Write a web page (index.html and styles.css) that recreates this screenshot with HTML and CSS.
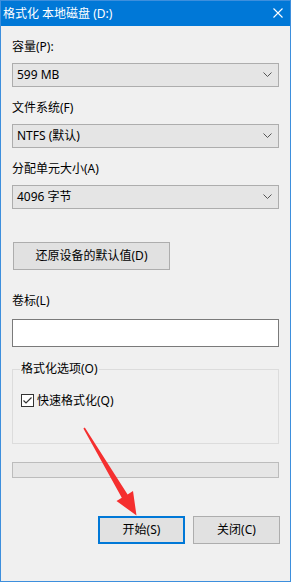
FILE: index.html
```html
<!DOCTYPE html>
<html lang="zh-CN">
<head>
<meta charset="utf-8">
<title>格式化 本地磁盘 (D:)</title>
<link rel="stylesheet" href="styles.css">
</head>
<body>
<div class="window">
  <div class="titlebar">
    <span class="title">格式化 本地磁盘 (D:)</span>
    <svg class="close" width="10" height="10" viewBox="0 0 10 10"><path d="M0.5 0.5L9.5 9.5M9.5 0.5L0.5 9.5" stroke="#fff" stroke-width="1.1" fill="none"/></svg>
  </div>
  <div class="content">
    <div class="label first">容量(P):</div>
    <div class="combo"><span>599 MB</span><svg class="chev" width="9" height="5" viewBox="0 0 9 5"><path d="M0.5 0.5L4.5 4.5L8.5 0.5" stroke="#555" stroke-width="1" fill="none"/></svg></div>
    <div class="label">文件系统(F)</div>
    <div class="combo"><span>NTFS (默认)</span><svg class="chev" width="9" height="5" viewBox="0 0 9 5"><path d="M0.5 0.5L4.5 4.5L8.5 0.5" stroke="#555" stroke-width="1" fill="none"/></svg></div>
    <div class="label">分配单元大小(A)</div>
    <div class="combo"><span>4096 字节</span><svg class="chev" width="9" height="5" viewBox="0 0 9 5"><path d="M0.5 0.5L4.5 4.5L8.5 0.5" stroke="#555" stroke-width="1" fill="none"/></svg></div>
    <div class="btn restore">还原设备的默认值(D)</div>
    <div class="label vol">卷标(L)</div>
    <div class="textbox"></div>
    <fieldset class="group">
      <legend>格式化选项(O)</legend>
      <div class="check-row">
        <svg class="checkbox" width="13" height="13" viewBox="0 0 13 13"><rect x="0.5" y="0.5" width="12" height="12" fill="#fff" stroke="#333"/><path d="M2.5 6.5L5 9L10.5 3.5" stroke="#333" stroke-width="1.2" fill="none"/></svg>
        <span>快速格式化(Q)</span>
      </div>
    </fieldset>
    <div class="progress"></div>
    <div class="actions">
      <div class="btn action default">开始(S)</div>
      <div class="btn action">关闭(C)</div>
    </div>
  </div>
  <svg class="arrow" width="291" height="582" viewBox="0 0 291 582"><polygon points="83.4,428.4 84.8,427.6 127.6,494.4 133,491 136.5,515.5 116.5,501 121.8,497.8" fill="#f52f2f"/></svg>
</div>
</body>
</html>
```

FILE: styles.css
```css
html, body {
  margin: 0;
  padding: 0;
}
body {
  font-family: "Noto Sans", "Noto Sans CJK SC", sans-serif;
  font-size: 12px;
  color: #000;
  background: #f0f0f0;
}
.window {
  position: relative;
  width: 291px;
  height: 582px;
  box-sizing: border-box;
  border: 1px solid #3d8fdd;
  background: #f0f0f0;
  display: flex;
  flex-direction: column;
}
.titlebar {
  height: 25px;
  background: #0078d7;
  display: flex;
  align-items: center;
  justify-content: space-between;
  padding: 0 7px 0 2px;
  color: #fff;
  flex-shrink: 0;
}
.title {
  line-height: 16px;
}
.close {
  display: block;
  margin-top: -1px;
}
.content {
  padding: 0 11px;
  display: flex;
  flex-direction: column;
}
.label {
  line-height: 16px;
  height: 16px;
  margin-top: 13px;
  margin-bottom: 8px;
  padding-left: 0;
}
.label.first {
  margin-top: 13px;
}
.combo {
  height: 24px;
  box-sizing: border-box;
  border: 1px solid #adadad;
  background: #e5e5e5;
  display: flex;
  align-items: center;
  justify-content: space-between;
  padding: 0 4px 0 4px;
  line-height: 16px;
}
.chev {
  display: block;
  margin-right: 2px;
  margin-top: -1px;
}
.btn {
  box-sizing: border-box;
  border: 1px solid #adadad;
  background: #e1e1e1;
  display: flex;
  align-items: center;
  justify-content: center;
  line-height: 16px;
}
.restore {
  margin-top: 33px;
  margin-left: 1px;
  width: 157px;
  height: 28px;
}
.label.vol {
  margin-top: 23px;
  margin-bottom: 10px;
}
.textbox {
  height: 28px;
  box-sizing: border-box;
  border: 1px solid #7a7a7a;
  background: #fff;
}
.group {
  margin: 14px 0 0 0;
  padding: 0 7px 35px 7px;
  border: 1px solid #dcdcdc;
  min-width: 0;
}
.group legend {
  padding: 0 1px;
  line-height: 16px;
}
.check-row {
  margin-top: 15px;
  margin-left: 1px;
  display: flex;
  align-items: center;
  height: 16px;
  gap: 3px;
}
.checkbox {
  display: block;
}
.progress {
  margin-top: 18px;
  height: 16px;
  box-sizing: border-box;
  border: 1px solid #bcbcbc;
  background: #e6e6e6;
}
.actions {
  margin-top: 38px;
  margin-right: -1px;
  display: flex;
  justify-content: flex-end;
  gap: 8px;
}
.action {
  width: 87px;
  height: 28px;
}
.action.default {
  border: 2px solid #0078d7;
}
.arrow {
  position: absolute;
  left: -1px;
  top: -1px;
  pointer-events: none;
}
```
